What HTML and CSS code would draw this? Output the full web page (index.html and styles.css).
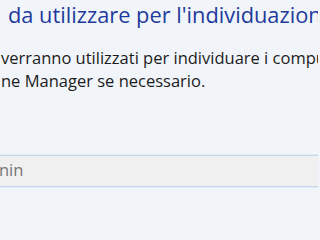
FILE: index.html
```html
<!DOCTYPE html>
<html lang="it">
<head>
<meta charset="utf-8">
<link rel="stylesheet" href="styles.css">
</head>
<body>
<div class="page">
  <h1 class="title">da utilizzare per l'individuazion</h1>
  <p class="desc">verranno utilizzati per individuare i compu<br>ne Manager se necessario.</p>
  <div class="field"><span class="field-text">nin</span></div>
</div>
</body>
</html>
```
FILE: styles.css
```css
html, body {
  margin: 0;
  padding: 0;
  background: #f1f5fa;
  overflow: hidden;
}
.page {
  width: 318px;
  height: 200px;
  overflow: hidden;
  display: flex;
  flex-direction: column;
  font-family: "Open Sans", "Noto Sans", sans-serif;
}
.title {
  margin: 0;
  padding: 1px 0 0 8px;
  font-size: 21.8px;
  font-weight: 400;
  line-height: 28px;
  color: #1f3a9c;
  white-space: nowrap;
}
.desc {
  margin: 17px 0 0 1px;
  font-size: 16.5px;
  line-height: 23px;
  color: #1c1c1c;
  white-space: nowrap;
}
.field {
  margin-top: 63px;
  height: 28px;
  background: #f0f0f0;
  border-top: 1px solid #c5d6e9;
  border-bottom: 1px solid #c5d6e9;
  box-shadow: 0 -1px 0 #e3ebf4, 0 1px 0 #e3ebf4;
  display: flex;
  align-items: center;
  padding-bottom: 2px;
  box-sizing: content-box;
}
.field-text {
  font-size: 16.5px;
  line-height: 22px;
  color: #767676;
  margin-left: -1px;
}
```
